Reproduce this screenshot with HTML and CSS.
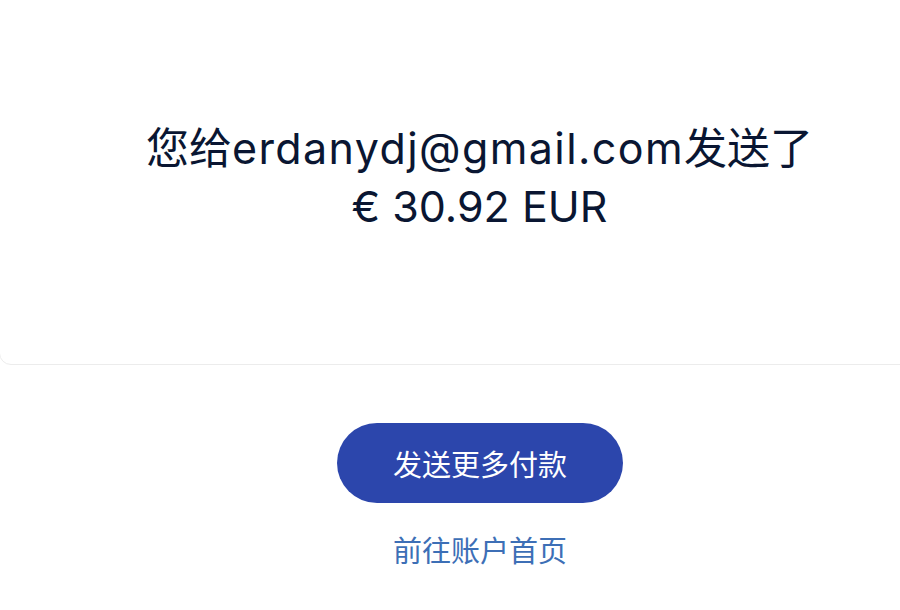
FILE: index.html
```html
<!DOCTYPE html>
<html lang="zh-CN">
<head>
    <meta charset="UTF-8">
    <meta name="viewport" content="width=device-width, initial-scale=1.0">
    <title>付款已发送</title>
    <link rel="stylesheet" href="styles.css">
</head>
<body>
    <div class="page">
        <!-- Confirmation Card -->
        <div class="card">
            <h1 class="title">您给<span class="email">erdanydj@gmail.com</span>发送了<br>€ 30.92 EUR</h1>
        </div>

        <!-- Actions -->
        <div class="actions">
            <button class="primary-btn">发送更多付款</button>
            <a class="home-link" href="#">前往账户首页</a>
        </div>
    </div>
</body>
</html>
```

FILE: styles.css
```css
/* General Styling */
body {
    margin: 0;
    background: #fff;
    font-family: Inter, "Noto Sans CJK SC", sans-serif;
    color: #0a1632;
    overflow: hidden;
}

/* Page wrapper, a bit wider than the window */
.page {
    width: 960px;
}

/* Card */
.card {
    margin: -20px 0 0 -1px;
    padding: 138px 0 0;
    height: 245px;
    border: 1px solid #ececec;
    border-radius: 12px;
    background: #fff;
    text-align: center;
}

.title {
    margin: 0;
    font-size: 43px;
    font-weight: 400;
    line-height: 58px;
}

.email {
    letter-spacing: 1.4px;
}

/* Actions */
.actions {
    display: flex;
    flex-direction: column;
    align-items: center;
    padding-top: 58px;
}

.primary-btn {
    width: 286px;
    height: 80px;
    border: none;
    border-radius: 40px;
    background: #2c46ac;
    color: #fff;
    font-family: "Noto Sans CJK SC", sans-serif;
    font-size: 29px;
    cursor: pointer;
}

.home-link {
    margin-top: 25px;
    color: #3d6fb6;
    font-family: "Noto Sans CJK SC", sans-serif;
    font-size: 29px;
    text-decoration: none;
}
```
